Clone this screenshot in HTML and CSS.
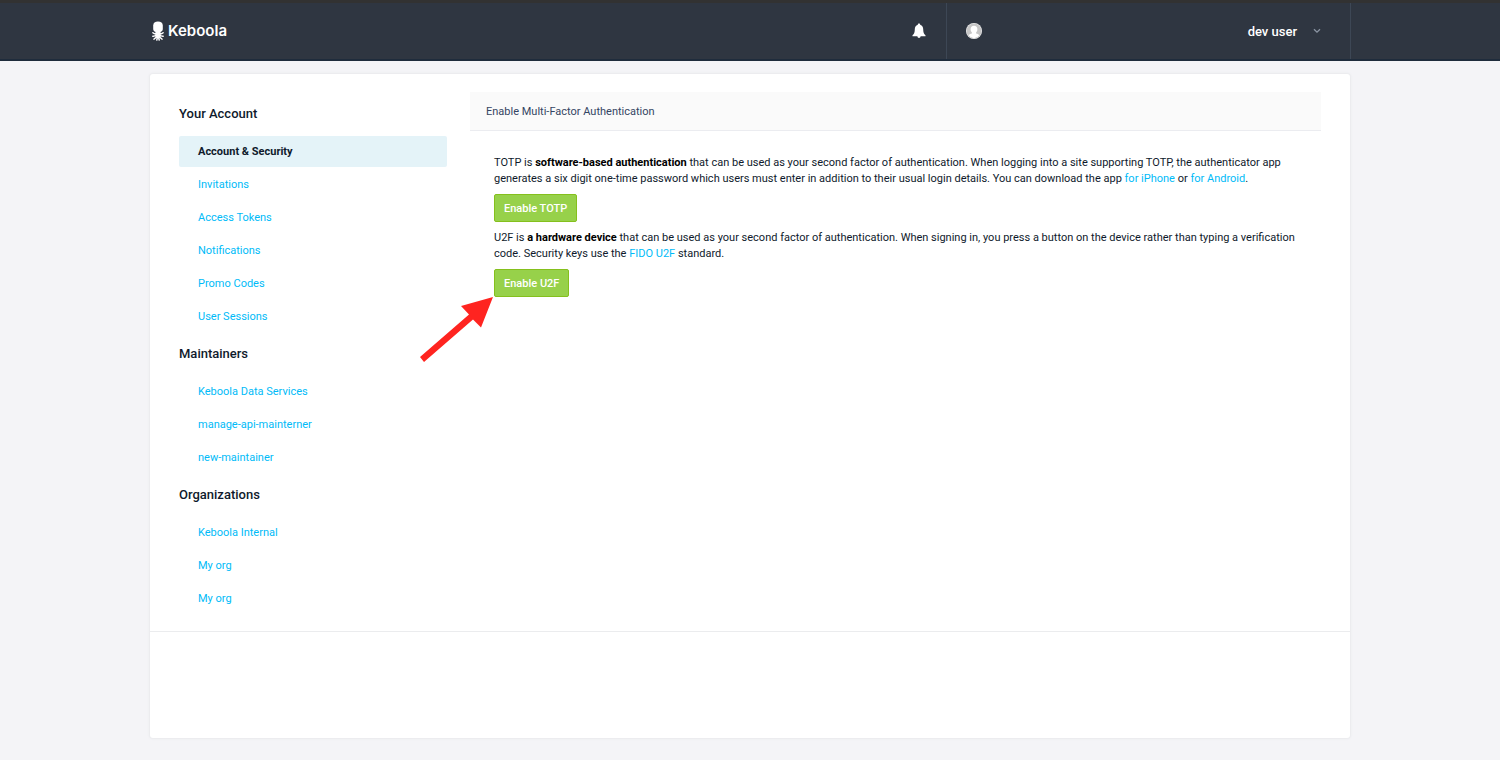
FILE: index.html
```html
<!DOCTYPE html>
<html lang="en">
<head>
<meta charset="utf-8">
<title>Keboola - Account &amp; Security</title>
<link rel="stylesheet" href="styles.css">
</head>
<body>
<header class="topbar">
  <div class="topbar-inner">
    <a class="brand" href="#">
      <svg class="brand-mark" viewBox="0 0 12 20" aria-hidden="true">
        <path d="M6 .5C3 .5 1.200 2 1.200 4.500v3.500C1.200 9.500 2.200 10.600 3.500 11h5c1.300-.4 2.300-1.500 2.300-3V4.500C10.800 2 9 .5 6 .5z" fill="#fff"/>
        <g fill="none" stroke="#fff" stroke-width="1.500" stroke-linecap="round"><path d="M4.500 12C3.500 13.200 2 12.800 .9 11.800M7.500 12c1 1.200 2.500.8 3.600-.2M4.500 13.500C3.800 15 2.500 15.300 .8 15.200M7.500 13.500c.7 1.500 2 1.800 3.700 1.700M4.800 14C4.400 16.500 3.400 17.500 2 18.200M7.200 14c.4 2.500 1.400 3.500 2.800 4.200M5.300 14v3l-.5 2M6.700 14v3l.5 2"/></g>
        <path d="M3.500 10.800h5L8.200 14 6 15.500 3.800 14z" fill="#fff"/>
      </svg>
      <span>Keboola</span>
    </a>
    <div class="topbar-right">
      <button class="bell" type="button" aria-label="Notifications">
        <svg viewBox="0 0 14 16" aria-hidden="true"><path fill="#fff" d="M7 .6c-.7 0-1.200.5-1.200 1.100C3.700 2.300 2.800 4 2.800 6.200c0 3.200-.7 4.500-2.300 6.100v.9h13v-.9c-1.600-1.600-2.300-2.900-2.300-6.100 0-2.200-.9-3.900-3-4.500C8.200 1.100 7.700.6 7 .6zM5.400 13.200c.1 1.100.7 1.700 1.600 1.700s1.500-.6 1.600-1.700z"/></svg>
      </button>
      <button class="user" type="button">
        <svg class="avatar" viewBox="0 0 16 16" aria-hidden="true"><circle cx="8" cy="8" r="8" fill="#f2f2f2"/><circle cx="8" cy="8" r="7.500" fill="#c6c6c6"/><path fill="#fff" d="M8 2.800c2.200 0 3.400 1.500 3.400 3.400 0 1.500-.6 2.500-1.300 3.200v1c1.500.4 2.800.9 3.300 1.900A7 7 0 0 1 8 15.200a7 7 0 0 1-5.400-2.900c.5-1 1.800-1.500 3.300-1.900v-1c-.7-.7-1.300-1.700-1.300-3.200 0-1.900 1.200-3.400 3.400-3.400z"/></svg>
        <span class="user-name">dev user</span>
        <svg class="caret" viewBox="0 0 8 6" aria-hidden="true"><path d="M1 1.200l3 3 3-3" fill="none" stroke="#8b95a3" stroke-width="1.300"/></svg>
      </button>
    </div>
  </div>
</header>
<div class="card">
  <div class="columns">
    <nav class="side" aria-label="Account">
      <h2>Your Account</h2>
      <ul>
        <li><a class="active" href="#">Account &amp; Security</a></li>
        <li><a href="#">Invitations</a></li>
        <li><a href="#">Access Tokens</a></li>
        <li><a href="#">Notifications</a></li>
        <li><a href="#">Promo Codes</a></li>
        <li><a href="#">User Sessions</a></li>
      </ul>
      <h2>Maintainers</h2>
      <ul>
        <li><a href="#">Keboola Data Services</a></li>
        <li><a href="#">manage-api-mainterner</a></li>
        <li><a href="#">new-maintainer</a></li>
      </ul>
      <h2>Organizations</h2>
      <ul>
        <li><a href="#">Keboola Internal</a></li>
        <li><a href="#">My org</a></li>
        <li><a href="#">My org</a></li>
      </ul>
    </nav>
    <main class="content">
      <h1>Enable Multi-Factor Authentication</h1>
      <div class="panel">
        <p>TOTP is <strong>software-based authentication</strong> that can be used as your second factor of authentication. When logging into a site supporting TOTP, the authenticator app generates a six digit one-time password which users must enter in addition to their usual login details. You can download the app <a href="#">for iPhone</a> or <a href="#">for Android</a>.</p>
        <button class="btn" type="button">Enable TOTP</button>
        <p>U2F is <strong>a hardware device</strong> that can be used as your second factor of authentication. When signing in, you press a button on the device rather than typing a verification code. Security keys use the <a href="#">FIDO U2F</a> standard.</p>
        <div class="pointed">
          <button class="btn" type="button">Enable U2F</button>
          <svg class="arrow" viewBox="0 0 74 68" aria-hidden="true"><path fill="#ff2420" d="M73 0L61 30.500 53 22.500 4 65 0 60 49 17.500 41 9z"/></svg>
        </div>
      </div>
    </main>
  </div>
</div>
</body>
</html>
```
FILE: styles.css
```css
* { box-sizing: border-box; }

body {
  margin: 0;
  min-height: 100vh;
  display: flex;
  flex-direction: column;
  background: #f4f4f7;
  color: #0f1a2c;
  font: 11px/16px Roboto, "Liberation Sans", sans-serif;
}

h1, h2, p, ul { margin: 0; padding: 0; }
ul { list-style: none; }
a { color: #00bbf8; text-decoration: none; }
button { font-family: inherit; cursor: pointer; }
svg { display: block; }

.topbar {
  background: #2f3641;
  border-top: 3px solid #323232;
  border-bottom: 2px solid #1f2c3c;
  padding: 0 149px;
}
.topbar-inner {
  display: flex;
  justify-content: space-between;
  max-width: 1203px;
  height: 56px;
  margin: 0 auto;
}
.brand {
  display: flex;
  align-items: center;
  gap: 4px;
  padding-left: 3px;
  color: #fff;
  font: 600 15px/20px Inter, "Open Sans", sans-serif;
}
.brand-mark { width: 12px; height: 20px; }
.topbar-right { display: flex; }
.bell, .user {
  display: flex;
  align-items: center;
  border: 0;
  background: none;
}
.bell { padding: 0 20px; }
.bell svg { width: 14px; height: 16px; }
.user {
  width: 405px;
  padding: 0 29px 0 19px;
  border: solid #3d4755;
  border-width: 0 1px;
  color: #fff;
  font-size: 13px;
  font-weight: 500;
}
.avatar { width: 16px; height: 16px; }
.user-name { margin-left: auto; }
.caret { width: 8px; height: 6px; margin-left: 16px; }

.card {
  flex: 1;
  width: calc(100% - 300px);
  max-width: 1200px;
  margin: 13px auto 22px;
  background: #fff;
  border-radius: 3px;
  box-shadow: 0 0 2px 1px #e9eaec;
}
.columns {
  display: grid;
  grid-template-columns: 268px 1fr;
  gap: 23px;
  padding: 18px 29px 17px;
  border-bottom: 1px solid #ebecee;
}

.side { padding-top: 13px; }
.side h2 {
  margin-bottom: 13px;
  font-size: 13px;
  line-height: 18px;
  font-weight: 500;
}
.side ul {
  display: grid;
  gap: 2px;
}
.side ul + h2 { margin-top: 13px; }
.side li a {
  display: block;
  padding: 8px 19px 7px;
  border-radius: 2px;
}
.side .active {
  background: #e4f3f8;
  color: #0f1a2c;
  font-weight: 700;
}

.content h1 {
  padding: 12px 16px 10px;
  background: #fafafa;
  border-bottom: 1px solid #ebecf0;
  color: #344563;
  font-size: 11px;
  font-weight: 400;
}
.panel { padding: 24px; }
.panel strong { color: #000; font-weight: 700; }
.panel p { margin-bottom: 7px; }
.btn {
  height: 28px;
  margin-bottom: 8px;
  padding: 0 9px;
  background: #97d14a;
  border: 1px solid #85c01d;
  border-radius: 2px;
  color: #fff;
  font-size: 11px;
  font-weight: 500;
}
.pointed {
  position: relative;
  width: max-content;
}
.arrow {
  position: absolute;
  top: 28px;
  right: 100%;
  width: 74px;
  height: 68px;
}
```
